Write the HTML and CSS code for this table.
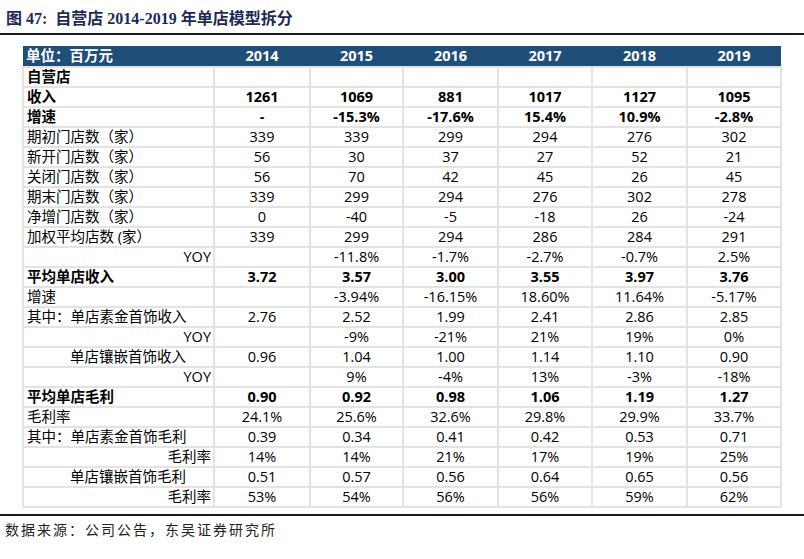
FILE: index.html
```html
<!DOCTYPE html>
<html lang="zh-CN">
<head>
<meta charset="utf-8">
<link rel="stylesheet" href="styles.css">
</head>
<body>
<div class="page">
  <div class="title">图 47:&nbsp; 自营店 2014-2019 年单店模型拆分</div>
  <div class="rule"></div>
  <table class="data">
    <colgroup>
      <col class="c0"><col class="c1"><col class="c2"><col class="c3"><col class="c4"><col class="c5"><col class="c6">
    </colgroup>
    <thead>
      <tr><th class="lbl">单位：百万元</th><th>2014</th><th>2015</th><th>2016</th><th>2017</th><th>2018</th><th>2019</th></tr>
    </thead>
    <tbody>
      <tr class="b"><td class="lbl">自营店</td><td></td><td></td><td></td><td></td><td></td><td></td></tr>
      <tr class="b"><td class="lbl">收入</td><td>1261</td><td>1069</td><td>881</td><td>1017</td><td>1127</td><td>1095</td></tr>
      <tr class="b"><td class="lbl">增速</td><td>-</td><td>-15.3%</td><td>-17.6%</td><td>15.4%</td><td>10.9%</td><td>-2.8%</td></tr>
      <tr><td class="lbl">期初门店数（家）</td><td>339</td><td>339</td><td>299</td><td>294</td><td>276</td><td>302</td></tr>
      <tr><td class="lbl">新开门店数（家）</td><td>56</td><td>30</td><td>37</td><td>27</td><td>52</td><td>21</td></tr>
      <tr><td class="lbl">关闭门店数（家）</td><td>56</td><td>70</td><td>42</td><td>45</td><td>26</td><td>45</td></tr>
      <tr><td class="lbl">期末门店数（家）</td><td>339</td><td>299</td><td>294</td><td>276</td><td>302</td><td>278</td></tr>
      <tr><td class="lbl">净增门店数（家）</td><td>0</td><td>-40</td><td>-5</td><td>-18</td><td>26</td><td>-24</td></tr>
      <tr><td class="lbl">加权平均店数 (家）</td><td>339</td><td>299</td><td>294</td><td>286</td><td>284</td><td>291</td></tr>
      <tr><td class="lbl r">YOY</td><td></td><td>-11.8%</td><td>-1.7%</td><td>-2.7%</td><td>-0.7%</td><td>2.5%</td></tr>
      <tr class="b"><td class="lbl">平均单店收入</td><td>3.72</td><td>3.57</td><td>3.00</td><td>3.55</td><td>3.97</td><td>3.76</td></tr>
      <tr><td class="lbl">增速</td><td></td><td>-3.94%</td><td>-16.15%</td><td>18.60%</td><td>11.64%</td><td>-5.17%</td></tr>
      <tr><td class="lbl">其中：单店素金首饰收入</td><td>2.76</td><td>2.52</td><td>1.99</td><td>2.41</td><td>2.86</td><td>2.85</td></tr>
      <tr><td class="lbl r">YOY</td><td></td><td>-9%</td><td>-21%</td><td>21%</td><td>19%</td><td>0%</td></tr>
      <tr><td class="lbl ind">单店镶嵌首饰收入</td><td>0.96</td><td>1.04</td><td>1.00</td><td>1.14</td><td>1.10</td><td>0.90</td></tr>
      <tr><td class="lbl r">YOY</td><td></td><td>9%</td><td>-4%</td><td>13%</td><td>-3%</td><td>-18%</td></tr>
      <tr class="b"><td class="lbl">平均单店毛利</td><td>0.90</td><td>0.92</td><td>0.98</td><td>1.06</td><td>1.19</td><td>1.27</td></tr>
      <tr><td class="lbl">毛利率</td><td>24.1%</td><td>25.6%</td><td>32.6%</td><td>29.8%</td><td>29.9%</td><td>33.7%</td></tr>
      <tr><td class="lbl">其中：单店素金首饰毛利</td><td>0.39</td><td>0.34</td><td>0.41</td><td>0.42</td><td>0.53</td><td>0.71</td></tr>
      <tr><td class="lbl r">毛利率</td><td>14%</td><td>14%</td><td>21%</td><td>17%</td><td>19%</td><td>25%</td></tr>
      <tr><td class="lbl ind">单店镶嵌首饰毛利</td><td>0.51</td><td>0.57</td><td>0.56</td><td>0.64</td><td>0.65</td><td>0.56</td></tr>
      <tr><td class="lbl r">毛利率</td><td>53%</td><td>54%</td><td>56%</td><td>56%</td><td>59%</td><td>62%</td></tr>
    </tbody>
  </table>
  <div class="rule bottom"></div>
  <div class="source">数据来源：公司公告，东吴证券研究所</div>
</div>
</body>
</html>
```

FILE: styles.css
```css
html, body {
  margin: 0;
  padding: 0;
  background: #ffffff;
}

.page {
  width: 804px;
  height: 559px;
  overflow: hidden;
}

.title {
  height: 33px;
  box-sizing: border-box;
  padding: 9px 0 0 6px;
  font-family: "Liberation Serif", "Noto Sans CJK SC", serif;
  font-weight: bold;
  font-size: 16px;
  line-height: 20px;
  color: #1c2a57;
}

.rule {
  height: 2px;
  background: #1a1a1a;
}

.data {
  margin: 11px 0 0 22px;
  border-collapse: collapse;
  table-layout: fixed;
  width: 758px;
  font-family: "Open Sans", "Noto Sans CJK SC", sans-serif;
  font-size: 14.5px;
  color: #000;
}

.c0 { width: 191px; }
.c1 { width: 96px; }
.c2 { width: 93px; }
.c3 { width: 95px; }
.c4 { width: 94px; }
.c5 { width: 95px; }
.c6 { width: 94px; }

.data th {
  height: 20px;
  padding: 0;
  background: #1f4e79;
  color: #ffffff;
  font-weight: bold;
  text-align: center;
  line-height: 20px;
  border: none;
}

.data td {
  height: 18px;
  padding: 0;
  line-height: 18px;
  text-align: center;
  border: 2px solid #e3e3e3;
  white-space: nowrap;
  overflow: hidden;
}

.data th.lbl,
.data td.lbl {
  text-align: left;
  padding-left: 3px;
}

.data td.lbl.r {
  text-align: right;
  padding-left: 0;
  padding-right: 2px;
}

.data td.lbl.ind {
  padding-left: 46px;
}

.data tr.b td {
  font-weight: bold;
}

.rule.bottom {
  margin-top: 6px;
}

.source {
  padding: 5px 0 0 5px;
  font-family: "Liberation Serif", "Noto Sans CJK SC", serif;
  font-size: 14px;
  line-height: 20px;
  color: #222;
  letter-spacing: 2px;
}
```
